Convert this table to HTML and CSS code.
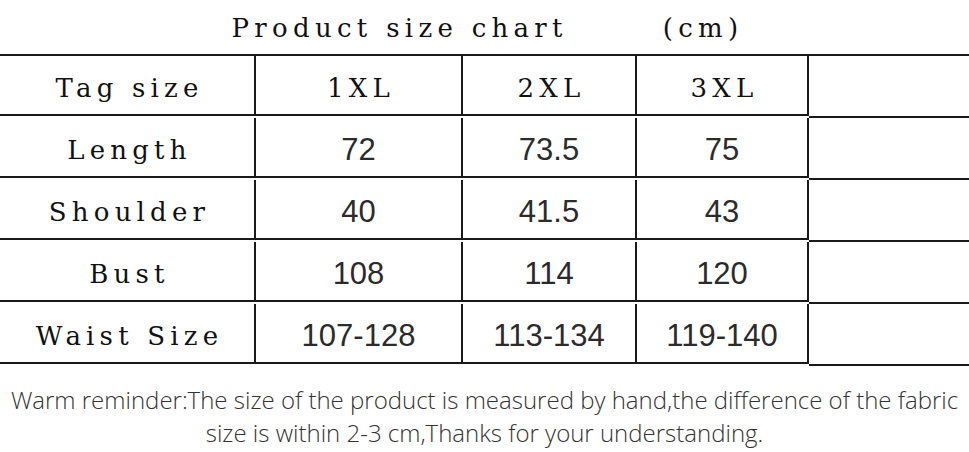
FILE: index.html
```html
<!DOCTYPE html>
<html lang="en">
<head>
<meta charset="utf-8">
<title>Product size chart</title>
<link rel="stylesheet" href="styles.css">
</head>
<body>
<div class="page">
  <h1 class="title">Product size chart       (cm)</h1>
  <div class="chart">
    <div class="cell label">Tag size</div>
    <div class="cell label">1XL</div>
    <div class="cell label">2XL</div>
    <div class="cell label">3XL</div>
    <div class="cell last"></div>

    <div class="cell label">Length</div>
    <div class="cell num">72</div>
    <div class="cell num">73.5</div>
    <div class="cell num">75</div>
    <div class="cell last"></div>

    <div class="cell label">Shoulder</div>
    <div class="cell num">40</div>
    <div class="cell num">41.5</div>
    <div class="cell num">43</div>
    <div class="cell last"></div>

    <div class="cell label">Bust</div>
    <div class="cell num">108</div>
    <div class="cell num">114</div>
    <div class="cell num">120</div>
    <div class="cell last"></div>

    <div class="cell label">Waist Size</div>
    <div class="cell num">107-128</div>
    <div class="cell num">113-134</div>
    <div class="cell num">119-140</div>
    <div class="cell last"></div>
  </div>
  <p class="note">Warm reminder:The size of the product is measured by hand,the difference of the fabric<br>size is within 2-3 cm,Thanks for your understanding.</p>
</div>
</body>
</html>
```

FILE: styles.css
```css
html, body {
  margin: 0;
  padding: 0;
  background: #ffffff;
}

.page {
  width: 969px;
  height: 452px;
  overflow: hidden;
}

.title {
  margin: 0;
  height: 54px;
  display: flex;
  align-items: center;
  justify-content: center;
  padding: 2px 0 0 6px;
  box-sizing: border-box;
  font-family: "DejaVu Serif", "Liberation Serif", serif;
  font-weight: normal;
  font-size: 26px;
  letter-spacing: 5.3px;
  white-space: pre;
  color: #111111;
}

.chart {
  display: grid;
  grid-template-columns: 256px 207px 174px 172px 1fr;
  border-top: 2px solid #1a1a1a;
}

.cell {
  height: 60px;
  border-bottom: 2px solid #1a1a1a;
  border-right: 2px solid #1a1a1a;
  display: flex;
  align-items: center;
  justify-content: center;
}

.cell.last {
  border-right: none;
}

.label {
  font-family: "DejaVu Serif", "Liberation Serif", serif;
  font-size: 26px;
  letter-spacing: 5.2px;
  color: #111111;
  padding: 6px 0 0 5px;
  box-sizing: border-box;
}

.num {
  font-family: "Liberation Sans", Arial, sans-serif;
  font-size: 31px;
  color: #2b2b2b;
  padding-top: 6px;
  box-sizing: border-box;
}

.note {
  margin: 0;
  padding-top: 17px;
  text-align: center;
  font-family: "Open Sans", "Noto Sans", sans-serif;
  font-weight: 300;
  font-size: 24px;
  line-height: 33px;
  color: #333333;
}
```
